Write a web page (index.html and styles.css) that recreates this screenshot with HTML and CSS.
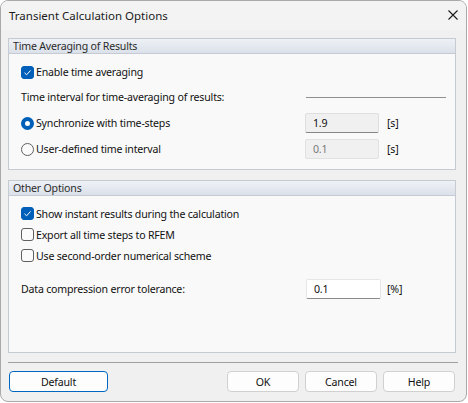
FILE: index.html
```html
<!DOCTYPE html>
<html lang="en">
<head>
<meta charset="utf-8">
<title>Transient Calculation Options</title>
<link rel="stylesheet" href="styles.css">
</head>
<body>
<div class="dialog">
  <div class="titlebar">
    <span class="title">Transient Calculation Options</span>
    <svg class="close" width="10" height="10" viewBox="0 0 10 10"><path d="M0.5 0.5L9.5 9.5M9.5 0.5L0.5 9.5" stroke="#1b1b1b" stroke-width="1.1" fill="none"/></svg>
  </div>

  <div class="content">
    <section class="group group-avg">
      <div class="group-head">Time Averaging of Results</div>
      <div class="group-body">
        <label class="row">
          <span class="check on"><svg width="13" height="13" viewBox="0 0 13 13"><path d="M3.5 6.8L5.6 8.8L9.6 4.4" stroke="#fff" stroke-width="1" fill="none"/></svg></span>
          <span>Enable time averaging</span>
        </label>
        <div class="row row-interval">
          <span class="label-text">Time interval for time-averaging of results:</span>
          <span class="rule"></span>
        </div>
        <div class="row">
          <span class="radio on"></span>
          <span class="label-text grow">Synchronize with time-steps</span>
          <span class="field ro">1.9</span>
          <span class="unit">[s]</span>
        </div>
        <div class="row">
          <span class="radio"></span>
          <span class="label-text grow">User-defined time interval</span>
          <span class="field disabled">0.1</span>
          <span class="unit">[s]</span>
        </div>
      </div>
    </section>

    <section class="group group-other">
      <div class="group-head">Other Options</div>
      <div class="group-body tight">
        <label class="row">
          <span class="check on"><svg width="13" height="13" viewBox="0 0 13 13"><path d="M3.5 6.8L5.6 8.8L9.6 4.4" stroke="#fff" stroke-width="1" fill="none"/></svg></span>
          <span>Show instant results during the calculation</span>
        </label>
        <label class="row">
          <span class="check"></span>
          <span>Export all time steps to RFEM</span>
        </label>
        <label class="row">
          <span class="check"></span>
          <span>Use second-order numerical scheme</span>
        </label>
        <div class="row row-tol">
          <span class="label-text grow">Data compression error tolerance:</span>
          <span class="field edit">0.1</span>
          <span class="unit">[%]</span>
        </div>
      </div>
    </section>

    <div class="separator"></div>

    <div class="buttons">
      <button class="btn btn-default">Default</button>
      <span class="spacer"></span>
      <button class="btn">OK</button>
      <button class="btn">Cancel</button>
      <button class="btn">Help</button>
    </div>
  </div>
</div>
</body>
</html>
```

FILE: styles.css
```css
html, body {
  margin: 0;
  padding: 0;
  background: #ffffff;
}

body {
  font-family: "Noto Sans", "Open Sans", sans-serif;
  font-size: 10.6px;
  letter-spacing: -0.2px;
  color: #111111;
}

.dialog {
  box-sizing: border-box;
  width: 467px;
  height: 402px;
  background: #f0f0f0;
  border: 1px solid #a9a9a9;
  border-radius: 8px;
  overflow: hidden;
  display: flex;
  flex-direction: column;
}

.titlebar {
  height: 29px;
  display: flex;
  align-items: center;
  justify-content: space-between;
  padding: 0 8px 0 8px;
  background: #f3f3f3;
}

.title {
  font-size: 11.5px;
  letter-spacing: 0;
  color: #1a1a1a;
}

.close {
  margin-top: -1px;
}

.content {
  padding: 8px 0 0 7px;
  display: flex;
  flex-direction: column;
}

.group {
  box-sizing: border-box;
  width: 448px;
  border: 1px solid #c5cad3;
  background: #f9f9f9;
  display: flex;
  flex-direction: column;
}

.group-avg {
  height: 132px;
}

.group-other {
  height: 173px;
  margin-top: 10px;
}

.group-head {
  height: 14px;
  line-height: 14px;
  padding-left: 4px;
  background: linear-gradient(#eef1f6, #dbe1ea);
  border-bottom: 1px solid #c5cad3;
  color: #2b2b2b;
}

.group-body {
  display: flex;
  flex-direction: column;
  gap: 6px;
  padding: 8px 0 0 12px;
}

.group-body.tight {
  gap: 0;
  padding-top: 7px;
}

.row {
  height: 20px;
  display: flex;
  align-items: center;
  white-space: nowrap;
}

.tight .row {
  height: 21px;
}

.tight .row-tol {
  height: 20px;
  margin-top: 13px;
}

.row-interval {
  margin-top: -1px;
}

.label-text {
  display: inline-block;
}

.grow {
  flex: 1;
}

.row-interval .label-text {
  flex: 1;
}

.rule {
  width: 140px;
  height: 1px;
  background: #8f8f8f;
  margin-right: 9px;
}

.check {
  box-sizing: border-box;
  width: 13px;
  height: 13px;
  border: 1px solid #5f5f5f;
  border-radius: 3px;
  background: #fbfbfb;
  margin-right: 2px;
  flex: none;
  display: flex;
}

.check.on {
  border-color: #005fb8;
  background: #005fb8;
}

.check svg {
  margin: -1px;
}

.radio {
  box-sizing: border-box;
  width: 13px;
  height: 13px;
  border-radius: 50%;
  border: 1px solid #5f5f5f;
  background: #fbfbfb;
  margin-right: 2px;
  flex: none;
}

.radio.on {
  border: 4px solid #005fb8;
  background: #ffffff;
}

.field {
  box-sizing: border-box;
  width: 74px;
  height: 20px;
  line-height: 18px;
  padding-left: 7px;
  margin-right: 8px;
  border: 1px solid #e1e1e1;
  border-radius: 2px;
  background: #f0f0f0;
}

.field.ro {
  border-color: #dedede;
  border-bottom-color: #868686;
}

.field.disabled {
  color: #7a7a7a;
}

.field.edit {
  width: 75px;
  background: #ffffff;
  border-color: #e6e6e6;
  border-bottom-color: #8a8a8a;
  margin-right: 6px;
}

.unit {
  width: 68px;
}

.separator {
  width: 450px;
  height: 1px;
  background: #a0a0a0;
  margin-top: 9px;
}

.buttons {
  display: flex;
  margin-top: 8px;
  width: 446px;
  margin-left: 1px;
  gap: 6px;
}

.spacer {
  flex: 1;
}

.btn {
  box-sizing: border-box;
  height: 21px;
  width: 72px;
  font-family: inherit;
  font-size: 10.6px;
  letter-spacing: -0.2px;
  color: #111111;
  background: #fdfdfd;
  border: 1px solid #d0d0d0;
  border-radius: 4px;
  padding: 0;
}

.btn-default {
  width: 99px;
  border-color: #0067c0;
}
```
